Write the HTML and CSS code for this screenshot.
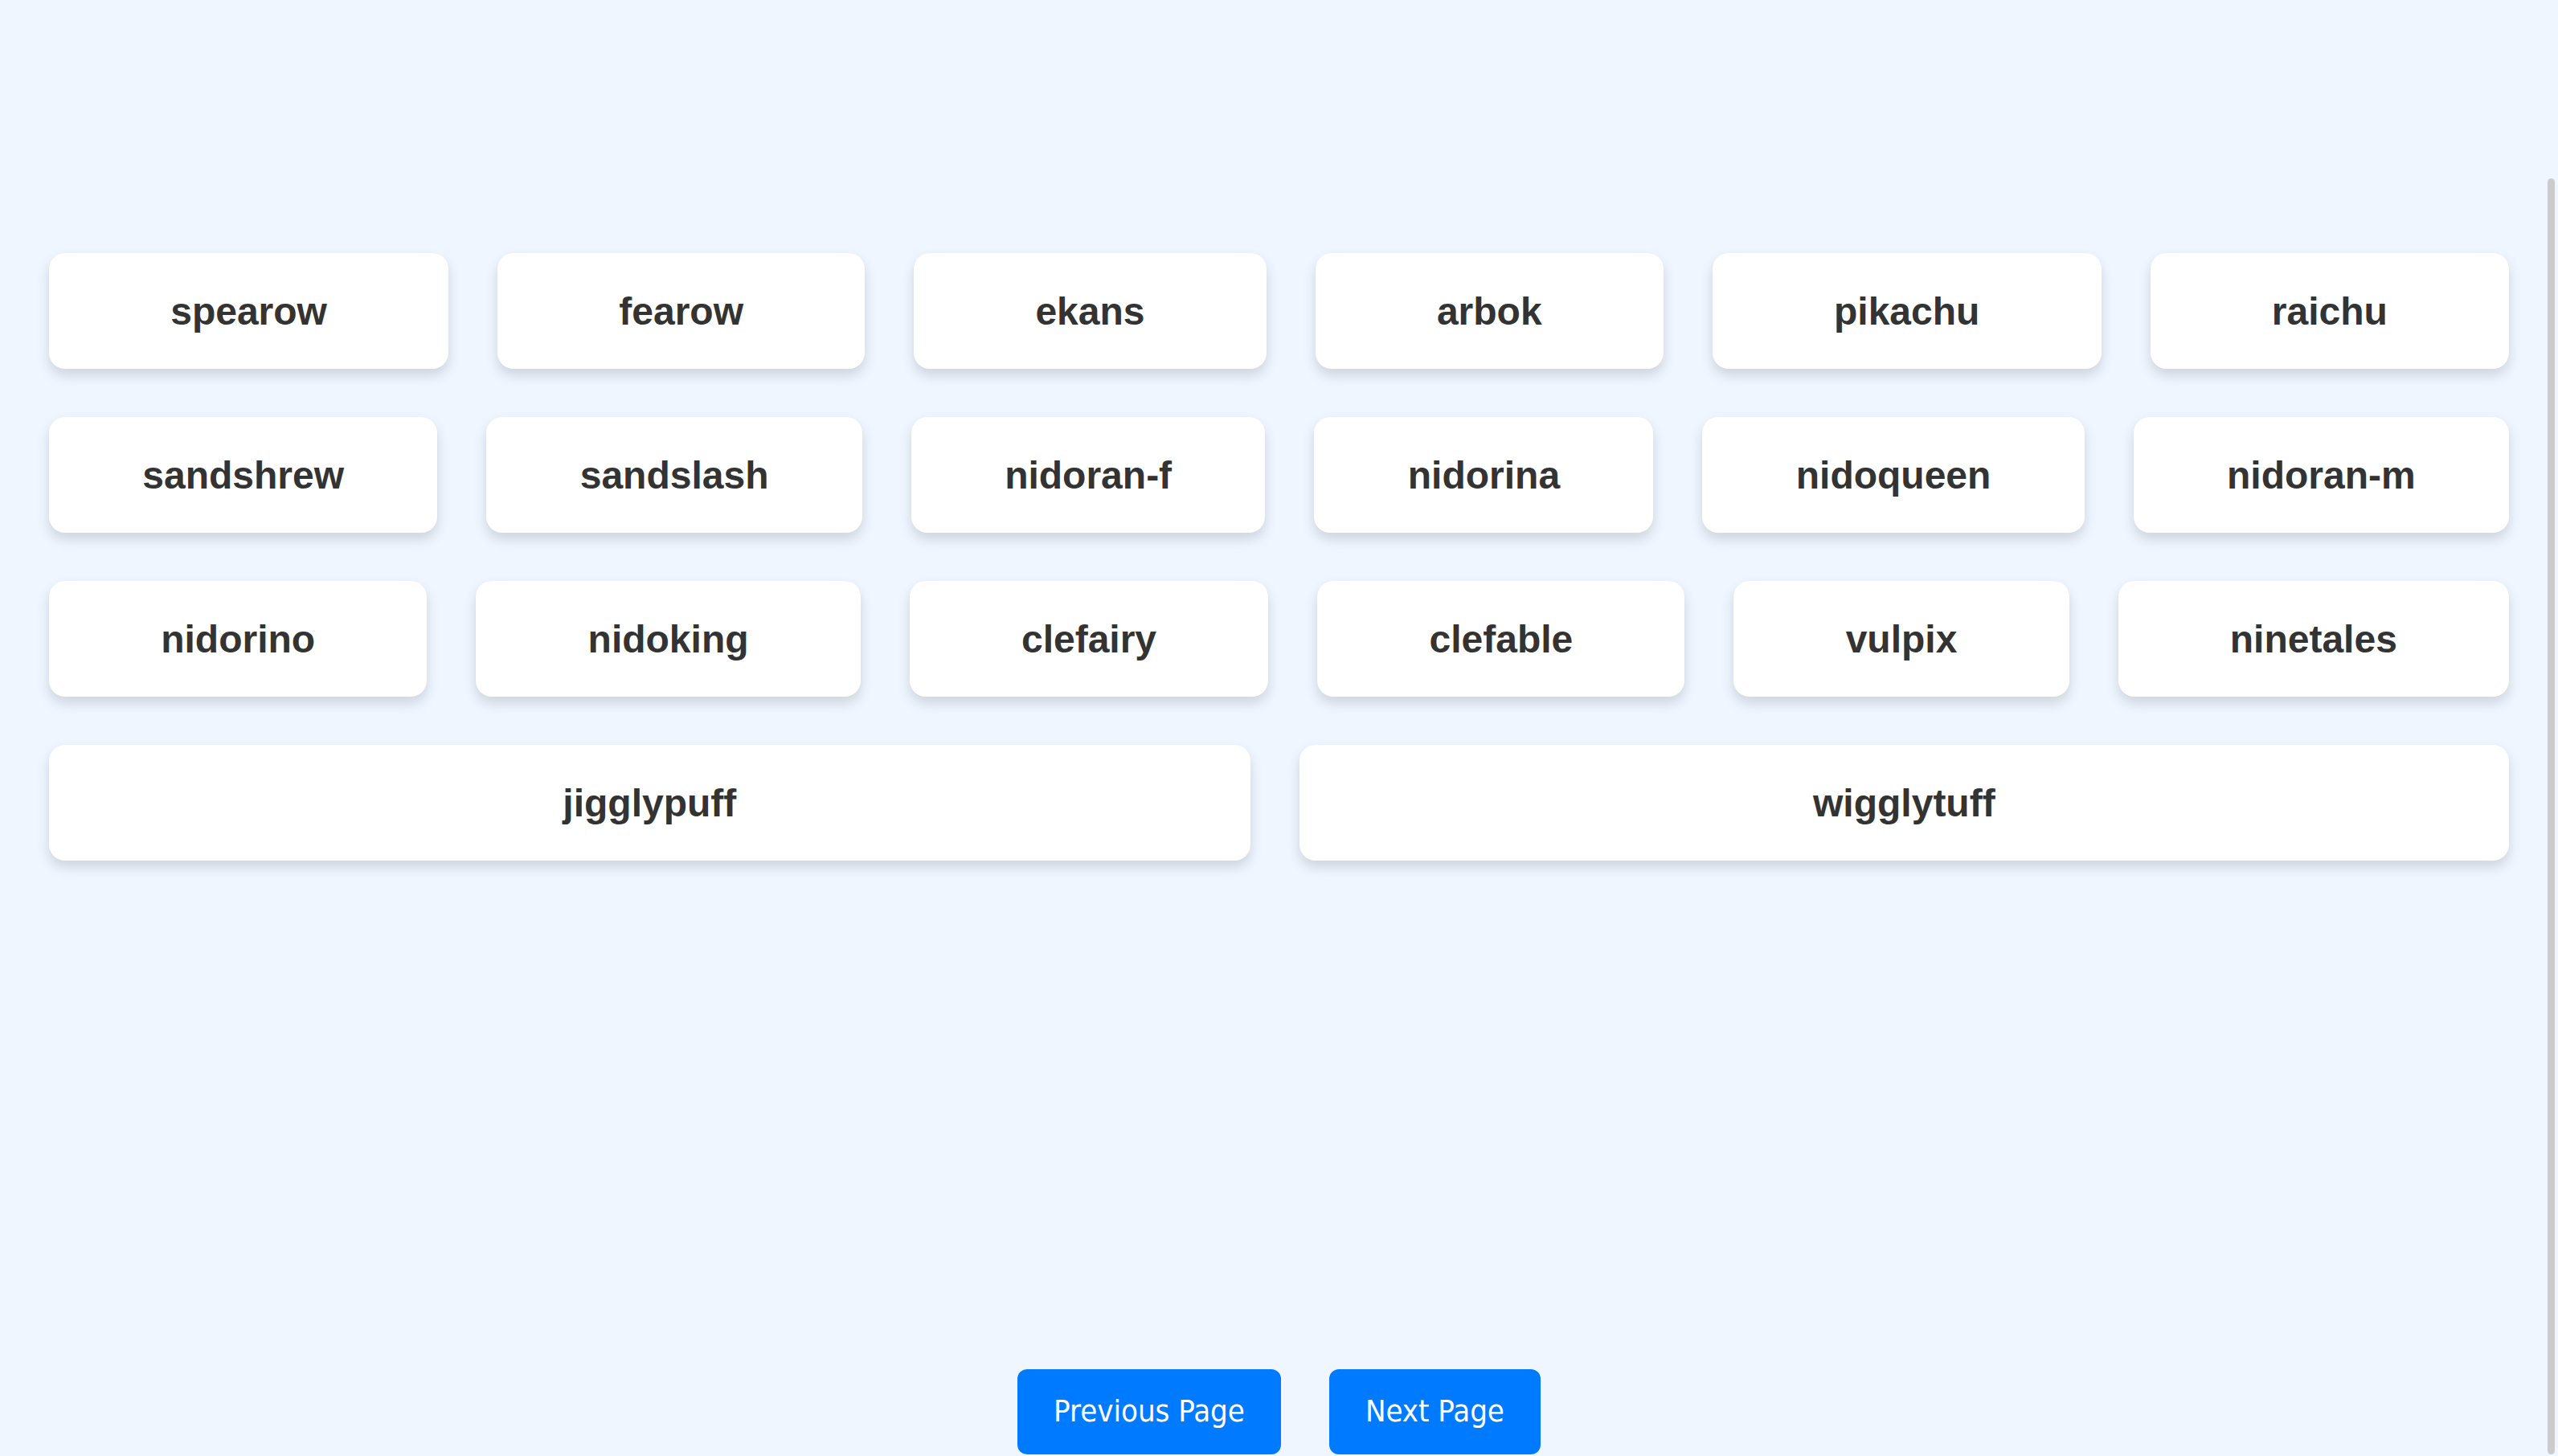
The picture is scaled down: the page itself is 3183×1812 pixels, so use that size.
FILE: index.html
```html
<!DOCTYPE html>
<html lang="en">
<head>
<meta charset="utf-8">
<title>Pokémon list</title>
<link rel="stylesheet" href="styles.css">
</head>
<body>
<div class="page">
  <ul class="grid">
    <li class="card">spearow</li>
    <li class="card">fearow</li>
    <li class="card">ekans</li>
    <li class="card">arbok</li>
    <li class="card">pikachu</li>
    <li class="card">raichu</li>
    <li class="card">sandshrew</li>
    <li class="card">sandslash</li>
    <li class="card">nidoran-f</li>
    <li class="card">nidorina</li>
    <li class="card">nidoqueen</li>
    <li class="card">nidoran-m</li>
    <li class="card">nidorino</li>
    <li class="card">nidoking</li>
    <li class="card">clefairy</li>
    <li class="card">clefable</li>
    <li class="card">vulpix</li>
    <li class="card">ninetales</li>
    <li class="card">jigglypuff</li>
    <li class="card">wigglytuff</li>
  </ul>
  <nav class="pagination">
    <button class="page-btn" type="button">Previous Page</button>
    <button class="page-btn" type="button">Next Page</button>
  </nav>
</div>
<div class="scroll-thumb" aria-hidden="true"></div>
</body>
</html>
```
FILE: styles.css
```css
html, body {
  margin: 0;
  padding: 0;
  height: 100%;
}

body {
  background: #eff6ff;
  font-family: "Liberation Sans", Arial, sans-serif;
  overflow: hidden;
}

.page {
  box-sizing: border-box;
  height: 100vh;
  display: flex;
  flex-direction: column;
  padding: 315px 61px 2px 61px;
}

.grid {
  list-style: none;
  margin: 0;
  padding: 0;
  display: flex;
  flex-wrap: wrap;
  column-gap: 61px;
  row-gap: 60px;
}

.card {
  flex: 1 1 auto;
  box-sizing: border-box;
  height: 144px;
  padding: 45px 114px 43px;
  background: #ffffff;
  border-radius: 20px;
  box-shadow: 0 8px 16px rgba(0, 0, 0, 0.14);
  color: #333333;
  font-size: 48px;
  line-height: 56px;
  font-weight: 700;
  text-align: center;
  white-space: nowrap;
}

.pagination {
  margin-top: auto;
  display: flex;
  justify-content: center;
  gap: 60px;
}

.page-btn {
  box-sizing: border-box;
  height: 106px;
  padding: 0 45px 2px;
  border: none;
  border-radius: 12px;
  background: #007bff;
  color: #ffffff;
  font-family: "DejaVu Sans Condensed", "DejaVu Sans", sans-serif;
  font-stretch: condensed;
  font-size: 38px;
  line-height: 48px;
  cursor: pointer;
}

.scroll-thumb {
  position: fixed;
  top: 222px;
  right: 4px;
  width: 9px;
  height: 1588px;
  border-radius: 5px;
  background: #cccccc;
}
```
